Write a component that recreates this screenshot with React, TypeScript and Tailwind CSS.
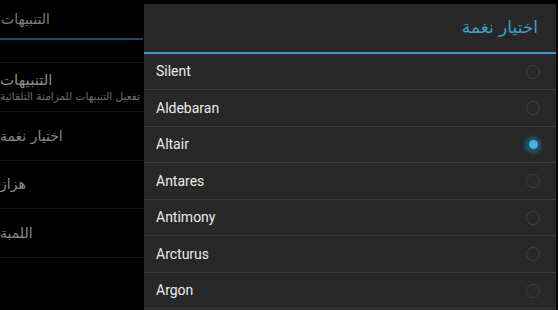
import React from 'react';

const tones = ['Silent', 'Aldebaran', 'Altair', 'Antares', 'Antimony', 'Arcturus', 'Argon'];
const selected = 'Altair';
// row heights incl. the 1px divider, matching the uneven density rounding
const rowH = ['h-[36px]', 'h-[37px]', 'h-[36px]', 'h-[37px]', 'h-[36px]', 'h-[37px]', 'h-[36px]'];

const arabic = { fontFamily: '"DejaVu Sans", "Noto Sans", sans-serif' };

export default function App() {
  return (
    <div className="relative w-[558px] h-[310px] bg-black overflow-hidden">
      {/* Background settings screen (dimmed) */}
      <div className="w-[143px]" style={arabic}>
        <div className="h-[38px] flex items-center justify-start pl-[1px] text-[14px] text-[#7c7c7c]">
          <span dir="rtl">التنبيهات</span>
        </div>
        <div className="h-[2px] bg-[#1f4d57]" />
        <div className="h-[23px] border-b border-[#151515]" />
        <div className="h-[49px] flex flex-col items-start justify-center border-b border-[#151515]">
          <span dir="rtl" className="text-[15px] leading-[18px] text-[#8a8a8a]">التنبيهات</span>
          <span dir="rtl" className="text-[10.5px] leading-[15px] text-[#6e6e6e] whitespace-nowrap">تفعيل التنبيهات للمزامنة التلقائية</span>
        </div>
        <div className="h-[49px] flex items-center text-[14px] text-[#8a8a8a] border-b border-[#151515]">
          <span dir="rtl">اختيار نغمة</span>
        </div>
        <div className="h-[48px] flex items-center text-[14px] text-[#8a8a8a] border-b border-[#151515]">
          <span dir="rtl">هزاز</span>
        </div>
        <div className="h-[49px] flex items-center text-[14px] text-[#8a8a8a] border-b border-[#151515]">
          <span dir="rtl">اللمبة</span>
        </div>
      </div>

      {/* Ringtone dialog */}
      <div className="absolute left-[144px] top-[4px] w-[412px] h-[340px] bg-[#282828]">
        <div dir="rtl" className="h-[48px] flex items-center pr-[18px] text-[17px] text-[#3ca3c6]" style={arabic}>
          اختيار نغمة
        </div>
        <div className="h-[2px] bg-[#3a9cbd]" />
        <ul>
          {tones.map((t, i) => (
            <li
              key={t}
              className={`${rowH[i]} border-b border-[#3a3a3a] flex items-center justify-between pl-[12px] pr-[16px] font-['Roboto',sans-serif] text-[14px] text-[#ececec]`}
            >
              <span>{t}</span>
              {t === selected ? (
                <span className="w-[14px] h-[14px] rounded-full bg-[#2a4a58] flex items-center justify-center shadow-[0_0_4px_#1e7fa8]">
                  <span className="w-[9px] h-[9px] rounded-full bg-[#38b6e8]" />
                </span>
              ) : (
                <span className="w-[14px] h-[14px] rounded-full border-[1.5px] border-[#424242]" />
              )}
            </li>
          ))}
        </ul>
      </div>
    </div>
  );
}
